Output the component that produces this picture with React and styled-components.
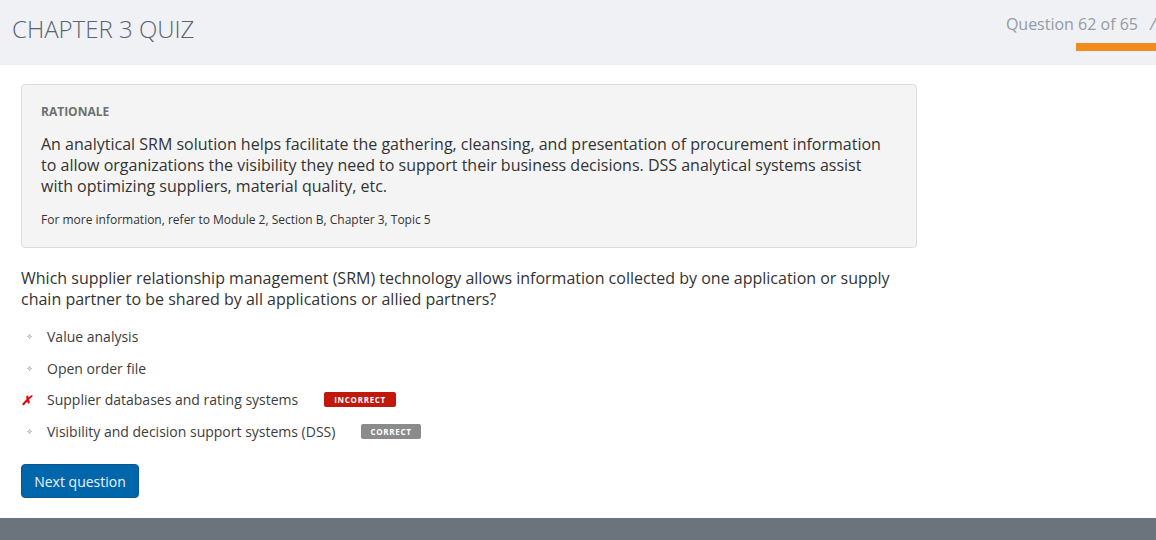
import React from "react";
import styled, { createGlobalStyle } from "styled-components";

const Global = createGlobalStyle`
  html, body { margin: 0; padding: 0; background: #fff; }
  body { font-family: "Open Sans", "Liberation Sans", sans-serif; overflow: hidden; }
  * { box-sizing: border-box; }
`;

const Page = styled.div`
  width: 1156px;
  height: 540px;
  display: flex;
  flex-direction: column;
  overflow: hidden;
`;

const Header = styled.header`
  height: 65px;
  flex: none;
  background: #eff1f5;
  display: flex;
  justify-content: space-between;
  align-items: flex-start;
  padding-left: 12px;
  overflow: hidden;
`;

const Title = styled.h1`
  margin: 12px 0 0;
  font-weight: 300;
  font-size: 24px;
  line-height: 34px;
  color: #5b6370;
`;

const RightBlock = styled.div`
  display: flex;
  flex-direction: column;
  align-items: flex-end;
  margin-right: -34px;
  padding-top: 12px;
`;

const MetaRow = styled.div`
  display: flex;
  align-items: center;
  gap: 12px;
`;

const Counter = styled.span`
  font-size: 16px;
  line-height: 24px;
  color: #959ba4;
`;

const Clipped = styled.span`
  width: 40px;
  font-size: 16px;
  line-height: 24px;
  color: #959ba4;
  font-style: italic;
`;

const Progress = styled.div`
  width: 114px;
  height: 8px;
  margin-top: 7px;
  background: #f28c1e;
`;

const Main = styled.main`
  flex: 1;
  padding: 19px 21px 0;
  display: flex;
  flex-direction: column;
`;

const Rationale = styled.section`
  width: 896px;
  background: #f4f4f4;
  border: 1px solid #dcdcdc;
  border-radius: 4px;
  padding: 18px 19px 19px;
`;

const Label = styled.div`
  font-size: 12px;
  font-weight: 700;
  line-height: 17px;
  color: #707070;
  margin-bottom: 14px;
`;

const Body = styled.p`
  margin: 0 0 14px;
  font-size: 16px;
  line-height: 21px;
  color: #333;
`;

const Note = styled.p`
  margin: 0;
  font-size: 12px;
  line-height: 17px;
  color: #333;
`;

const Question = styled.p`
  margin: 20px 0 10px;
  width: 896px;
  font-size: 16px;
  line-height: 21px;
  color: #333;
`;

const Options = styled.ul`
  list-style: none;
  margin: 0;
  padding: 0;
  display: flex;
  flex-direction: column;
`;

const Option = styled.li`
  height: ${(p) => p.$h}px;
  display: flex;
  align-items: center;
  font-size: 14px;
  color: #3d3d3d;
`;

const Marker = styled.span`
  width: 26px;
  flex: none;
  display: flex;
  align-items: center;
  padding-left: ${(p) => (p.$wrong ? "0" : "6px")};
  color: #e3000f;
  font-size: 13px;
  font-weight: 700;
  font-style: italic;
`;

const Badge = styled.span`
  margin-left: 26px;
  height: 15px;
  padding: 0 ${(p) => p.$pad}px;
  border-radius: 2px;
  display: inline-flex;
  align-items: center;
  font-size: 8px;
  font-weight: 700;
  letter-spacing: 0.7px;
  color: #fff;
  background: ${(p) => (p.$kind === "bad" ? "#c2170b" : "#8b8b8b")};
`;

const Button = styled.button`
  margin-top: 17px;
  align-self: flex-start;
  height: 34px;
  width: 118px;
  background: #0066ac;
  border: 1px solid #0b5690;
  border-radius: 4px;
  color: #eef4fa;
  font-family: inherit;
  font-size: 14px;
  font-weight: 500;
  cursor: pointer;
`;

const Footer = styled.footer`
  height: 22px;
  flex: none;
  background: #6b747c;
`;

const Bullet = () => (
  <svg width="5" height="5" viewBox="0 0 5 5">
    <rect x="2" y="0" width="1" height="1" fill="#bdbdbd" />
    <rect x="0" y="2" width="1" height="1" fill="#bdbdbd" />
    <rect x="4" y="2" width="1" height="1" fill="#bdbdbd" />
    <rect x="2" y="4" width="1" height="1" fill="#bdbdbd" />
    <rect x="1" y="1" width="3" height="3" fill="#cfcfcf" />
    <rect x="2" y="2" width="1" height="1" fill="#e8e8e8" />
  </svg>
);

const options = [
  { text: "Value analysis", h: 32 },
  { text: "Open order file", h: 32 },
  { text: "Supplier databases and rating systems", wrong: true, badge: "INCORRECT", kind: "bad", pad: 10, h: 31 },
  { text: "Visibility and decision support systems (DSS)", badge: "CORRECT", kind: "ok", pad: 9, h: 32 },
];

export default function App() {
  return (
    <>
      <Global />
      <Page>
        <Header>
          <Title>CHAPTER 3 QUIZ</Title>
          <RightBlock>
            <MetaRow>
              <Counter>Question 62 of 65</Counter>
              <Clipped>/</Clipped>
            </MetaRow>
            <Progress />
          </RightBlock>
        </Header>
        <Main>
          <Rationale>
            <Label>RATIONALE</Label>
            <Body>
              An analytical SRM solution helps facilitate the gathering, cleansing, and presentation of procurement information
              to allow organizations the visibility they need to support their business decisions. DSS analytical systems assist
              with optimizing suppliers, material quality, etc.
            </Body>
            <Note>For more information, refer to Module 2, Section B, Chapter 3, Topic 5</Note>
          </Rationale>
          <Question>
            Which supplier relationship management (SRM) technology allows information collected by one application or supply
            chain partner to be shared by all applications or allied partners?
          </Question>
          <Options>
            {options.map((o) => (
              <Option key={o.text} $h={o.h}>
                <Marker $wrong={o.wrong}>{o.wrong ? "✗" : <Bullet />}</Marker>
                {o.text}
                {o.badge && (
                  <Badge $kind={o.kind} $pad={o.pad}>
                    {o.badge}
                  </Badge>
                )}
              </Option>
            ))}
          </Options>
          <Button>Next question</Button>
        </Main>
        <Footer />
      </Page>
    </>
  );
}
